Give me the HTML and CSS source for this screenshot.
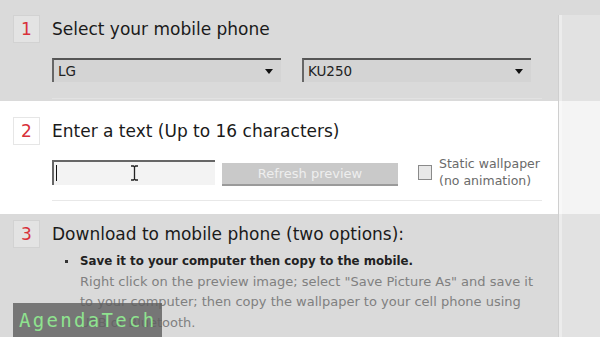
FILE: index.html
```html
<!DOCTYPE html>
<html>
<head>
<meta charset="utf-8">
<link rel="stylesheet" href="styles.css">
</head>
<body>
<div class="page">
  <section class="step step-1">
    <div class="head"><span class="num">1</span><h2>Select your mobile phone</h2></div>
    <div class="body selects">
      <div class="select"><span>LG</span><span class="arrow"></span></div>
      <div class="select"><span>KU250</span><span class="arrow"></span></div>
    </div>
  </section>
  <section class="step step-2">
    <div class="head"><span class="num">2</span><h2>Enter a text (Up to 16 characters)</h2></div>
    <div class="body form">
      <div class="input"><span class="caret"></span>
        <svg class="ibeam" width="9" height="16" viewBox="0 0 9 16"><path d="M1 1h2.5l1 1 1-1H8M1 15h2.5l1-1 1 1H8M4.5 2v12" fill="none" stroke="#222" stroke-width="1.3"/></svg>
      </div>
      <div class="button">Refresh preview</div>
      <label class="check"><span class="box"></span><span class="lbl">Static wallpaper<br>(no animation)</span></label>
    </div>
  </section>
  <section class="step step-3">
    <div class="head"><span class="num">3</span><h2>Download to mobile phone (two options):</h2></div>
    <ul class="opts">
      <li><b>Save it to your computer then copy to the mobile.</b><br><span class="desc">Right click on the preview image; select "Save Picture As" and save it to your computer; then copy the wallpaper to your cell phone using USB or Bluetooth.</span></li>
    </ul>
  </section>
  <div class="side"></div>
  <div class="watermark">AgendaTech</div>
</div>
</body>
</html>
```
FILE: styles.css
```css
* { box-sizing: border-box; }
html, body { margin: 0; padding: 0; }
body {
  background: #dadada;
  font-family: "DejaVu Sans", sans-serif;
  width: 600px; height: 337px; overflow: hidden;
}
.page { position: relative; width: 600px; height: 337px; overflow: hidden; }
.step { padding-left: 13px; }
.step-1 { height: 101px; padding-top: 15px; }
.step-2 { height: 113px; padding-top: 16px; background: #fff; }
.step-3 { padding-top: 6px; }
.head { display: flex; align-items: center; gap: 12px; }
.num {
  width: 27px; height: 28px;
  display: flex; align-items: center; justify-content: center;
  background: #e3e3e3; border: 1px solid #d2d2d2;
  color: #d8313a; font-size: 17px;
}
.step-2 .num { background: #fff; border-color: #e6e6e6; }
h2 { margin: 0; font-weight: normal; font-size: 17px; color: #1a1a1a; }
.body { margin-left: 39px; margin-right: 58px; border-bottom: 1px solid #e8e8e8; }
.selects { display: flex; gap: 21px; padding-top: 15px; height: 56px; border-bottom-color: #e2e2e2; }
.select {
  width: 229px; height: 24px;
  background: #d4d4d4;
  border-top: 2px solid #555; border-left: 2px solid #666;
  display: flex; align-items: center; justify-content: space-between;
  padding: 0 8px 0 4px;
  font-size: 13.5px; color: #222;
}
.arrow { width: 0; height: 0; border-left: 4px solid transparent; border-right: 4px solid transparent; border-top: 5px solid #111; }
.form { display: flex; align-items: flex-start; padding-top: 15px; height: 56px; }
.input {
  position: relative;
  width: 163px; height: 25px;
  background: #f3f3f3;
  border-top: 2px solid #666; border-left: 2px solid #666;
}
.caret { position: absolute; left: 2px; top: 3px; width: 1px; height: 16px; background: #111; }
.ibeam { position: absolute; left: 76px; top: 3px; }
.button {
  margin-left: 7px; margin-top: 3px;
  width: 176px; height: 23px;
  background: #c9c9c9; border-bottom: 2px solid #9a9a9a;
  color: #eeeeee; font-size: 13px;
  display: flex; align-items: center; justify-content: center;
}
.check { display: flex; align-items: flex-start; margin-left: 20px; margin-top: -5px; gap: 7px; }
.box { width: 14px; height: 15px; margin-top: 10px; border: 1px solid #8a8a8a; background: #e8e8e8; }
.lbl { font-size: 12.5px; color: #6a6a6a; line-height: 17px; }
.opts { margin: 3px 0 0 0; padding: 0 0 0 67px; list-style: none; width: 535px; }
.opts li { position: relative; font-size: 13px; line-height: 20.5px; color: #222; }
.opts li b { font-size: 11.8px; }
.opts li::before { content: ""; position: absolute; left: -15px; top: 9px; width: 3px; height: 3px; background: #333; }
.desc { color: #808080; }
.side {
  position: absolute; left: 558px; top: 15px; width: 42px; bottom: 0;
  background: rgba(233,233,233,0.5);
  border-left: 1px solid #cfcfcf;
  box-shadow: inset 3px 0 0 rgba(255,255,255,0.35);
}
.watermark {
  position: absolute; left: 13px; top: 303px; width: 149px; height: 34px;
  background: rgba(95,95,95,0.82);
  color: #8fe38f; font-family: "DejaVu Sans Mono", monospace; font-size: 19px;
  letter-spacing: 2.3px;
  padding: 6px 0 0 6px;
}
```
